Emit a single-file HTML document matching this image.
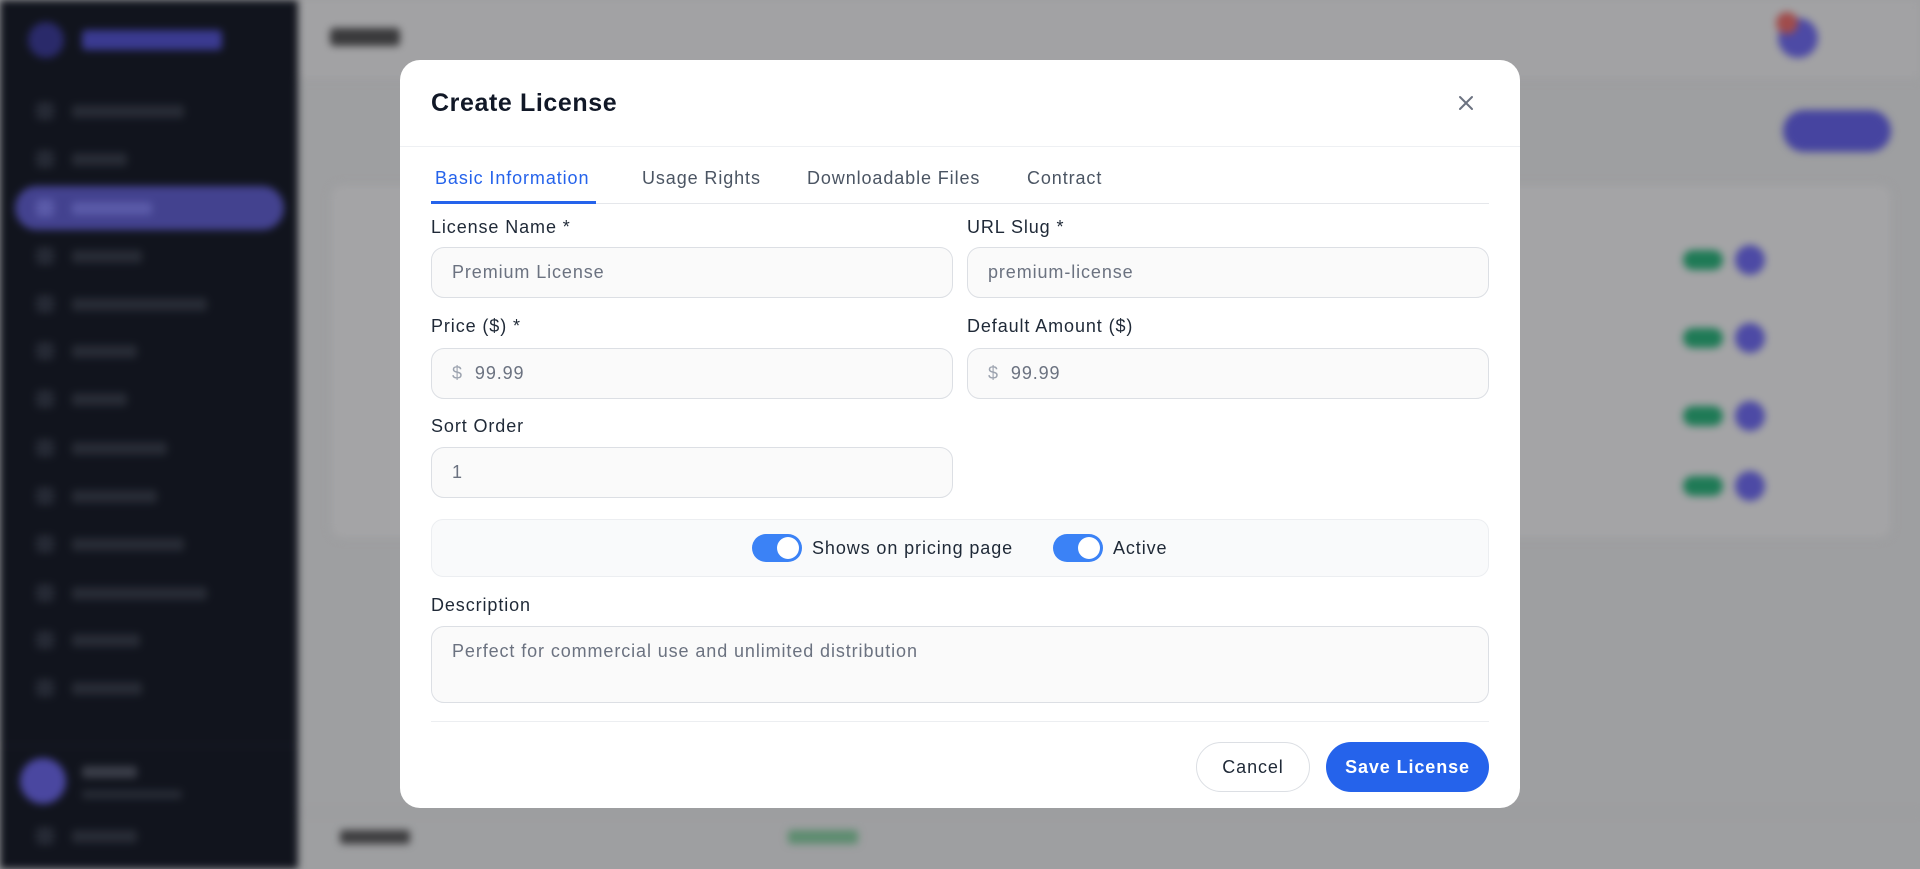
<!DOCTYPE html>
<html><head><meta charset="utf-8"><style>
*{box-sizing:border-box;margin:0;padding:0}
body{width:1920px;height:869px;overflow:hidden;font-family:"Liberation Sans",sans-serif;background:#9e9fa1;position:relative}
.bg{position:absolute;inset:0;filter:blur(4px)}
.side{position:absolute;left:0;top:0;width:298px;height:869px;background:#11141d}
.side .it{position:absolute;left:36px;height:16px;display:flex;align-items:center;gap:18px}
.side .ic{width:18px;height:18px;border-radius:4px;background:#252934}
.side .tx{height:13px;background:#272b35;border-radius:3px}
.pill{position:absolute;left:15px;top:186px;width:269px;height:44px;border-radius:22px;background:#43428f}
.main{position:absolute;left:298px;top:0;right:0;bottom:0}
.modal{position:absolute;left:400px;top:60px;width:1120px;height:748px;background:#fff;border-radius:20px;letter-spacing:0.9px}
.title{position:absolute;left:31px;font-size:25px;font-weight:700;color:#111827;letter-spacing:0.6px}
.hdr{position:absolute;left:0;right:0;top:86px;border-top:1px solid #eef0f3}
.tabs{position:absolute;left:31px;top:108px;width:1058px;height:36px;border-bottom:1px solid #e5e7eb}
.tab{position:absolute;top:0;font-size:18px;color:#4b5563}
.tab.on{color:#2563eb}
.ul{position:absolute;left:0;top:33px;width:165px;height:3px;background:#2563eb}
.lbl{position:absolute;font-size:18px;color:#1f2937}
.inp{position:absolute;height:51px;border:1px solid #dcdfe4;border-radius:13px;background:#fafafa;font-size:18px;color:#6b7280;padding-left:20px;display:flex;align-items:center}
.tg{position:absolute;width:50px;height:28px;border-radius:14px;background:#3b82f6}
.tg:after{content:"";position:absolute;right:3px;top:3px;width:22px;height:22px;border-radius:50%;background:#fff}
.btn{position:absolute;top:682px;height:50px;border-radius:25px;font-size:18px;display:flex;align-items:center;justify-content:center}
</style></head><body>
<div class="bg">
 <div class="side">
  <div style="position:absolute;left:28px;top:22px;width:36px;height:36px;border-radius:50%;background:#2a2a6a"></div>
  <div style="position:absolute;left:82px;top:30px;width:140px;height:20px;background:#3a3a90;border-radius:4px"></div>
  <div class="pill"></div>
  <div class="it" style="top:103px"><div class="ic"></div><div class="tx" style="width:112px"></div></div>
  <div class="it" style="top:151px"><div class="ic"></div><div class="tx" style="width:55px"></div></div>
  <div class="it" style="top:200px"><div class="ic" style="background:#5a5aa8"></div><div class="tx" style="width:80px;background:#5a5aa8"></div></div>
  <div class="it" style="top:248px"><div class="ic"></div><div class="tx" style="width:70px"></div></div>
  <div class="it" style="top:296px"><div class="ic"></div><div class="tx" style="width:135px"></div></div>
  <div class="it" style="top:343px"><div class="ic"></div><div class="tx" style="width:65px"></div></div>
  <div class="it" style="top:391px"><div class="ic"></div><div class="tx" style="width:55px"></div></div>
  <div class="it" style="top:440px"><div class="ic"></div><div class="tx" style="width:95px"></div></div>
  <div class="it" style="top:488px"><div class="ic"></div><div class="tx" style="width:85px"></div></div>
  <div class="it" style="top:536px"><div class="ic"></div><div class="tx" style="width:112px"></div></div>
  <div class="it" style="top:585px"><div class="ic"></div><div class="tx" style="width:135px"></div></div>
  <div class="it" style="top:632px"><div class="ic"></div><div class="tx" style="width:68px"></div></div>
  <div class="it" style="top:680px"><div class="ic"></div><div class="tx" style="width:70px"></div></div>
  <div style="position:absolute;left:0;right:0;top:745px;border-top:1px solid #1f2330"></div>
  <div style="position:absolute;left:20px;top:758px;width:46px;height:46px;border-radius:50%;background:#4a47a0"></div>
  <div style="position:absolute;left:82px;top:766px;width:55px;height:12px;background:#3a3d48;border-radius:3px"></div>
  <div style="position:absolute;left:82px;top:790px;width:100px;height:9px;background:#262a34;border-radius:3px"></div>
  <div class="it" style="top:828px"><div class="ic"></div><div class="tx" style="width:65px"></div></div>
 </div>
 <div class="main">
  <div style="position:absolute;left:0;right:0;top:0;height:80px;background:#a2a2a4;border-bottom:1px solid #979799"></div>
  <div style="position:absolute;left:32px;top:28px;width:70px;height:18px;background:#3a3a3c;border-radius:4px"></div>
  <div style="position:absolute;left:1480px;top:18px;width:40px;height:40px;border-radius:50%;background:#4d4aa5"></div>
  <div style="position:absolute;left:1478px;top:12px;width:22px;height:22px;border-radius:50%;background:#a04c4c"></div>
  <div style="position:absolute;left:1485px;top:110px;width:108px;height:42px;border-radius:21px;background:#4644a0"></div>
  <div style="position:absolute;left:32px;top:184px;width:1562px;height:355px;border-radius:12px;background:#a4a4a6;border:1px solid #9a9a9c"></div>
  <div style="position:absolute;left:1385px;top:250px;width:40px;height:20px;border-radius:10px;background:#1f7a56"></div>
  <div style="position:absolute;left:1385px;top:328px;width:40px;height:20px;border-radius:10px;background:#1f7a56"></div>
  <div style="position:absolute;left:1385px;top:406px;width:40px;height:20px;border-radius:10px;background:#1f7a56"></div>
  <div style="position:absolute;left:1385px;top:476px;width:40px;height:20px;border-radius:10px;background:#1f7a56"></div>
  <div style="position:absolute;left:1437px;top:245px;width:30px;height:30px;border-radius:50%;background:#4d4aa5"></div>
  <div style="position:absolute;left:1437px;top:323px;width:30px;height:30px;border-radius:50%;background:#4d4aa5"></div>
  <div style="position:absolute;left:1437px;top:401px;width:30px;height:30px;border-radius:50%;background:#4d4aa5"></div>
  <div style="position:absolute;left:1437px;top:471px;width:30px;height:30px;border-radius:50%;background:#4d4aa5"></div>
  <div style="position:absolute;left:0;right:0;top:812px;border-top:1px solid #979799"></div>
  <div style="position:absolute;left:42px;top:830px;width:70px;height:14px;background:#3e3e40;border-radius:3px"></div>
  <div style="position:absolute;left:490px;top:830px;width:70px;height:14px;background:#5d8c6f;border-radius:3px"></div>
 </div>
</div>
<div class="modal">
 <div class="title" style="top:29px">Create License</div>
 <svg style="position:absolute;left:1056px;top:33px" width="20" height="20" viewBox="0 0 20 20"><path d="M4 4L16 16M16 4L4 16" stroke="#6b7280" stroke-width="2" stroke-linecap="round"/></svg>
 <div class="hdr"></div>
 <div class="tabs">
  <div class="tab on" style="left:4px">Basic Information</div>
  <div class="tab" style="left:211px">Usage Rights</div>
  <div class="tab" style="left:376px">Downloadable Files</div>
  <div class="tab" style="left:596px">Contract</div>
  <div class="ul"></div>
 </div>
 <div class="lbl" style="left:31px;top:157px">License Name *</div>
 <div class="lbl" style="left:567px;top:157px">URL Slug *</div>
 <div class="inp" style="left:31px;top:187px;width:522px">Premium License</div>
 <div class="inp" style="left:567px;top:187px;width:522px">premium-license</div>
 <div class="lbl" style="left:31px;top:256px">Price ($) *</div>
 <div class="lbl" style="left:567px;top:256px">Default Amount ($)</div>
 <div class="inp" style="left:31px;top:288px;width:522px"><span style="color:#9ca3af;margin-right:12px">$</span>99.99</div>
 <div class="inp" style="left:567px;top:288px;width:522px"><span style="color:#9ca3af;margin-right:12px">$</span>99.99</div>
 <div class="lbl" style="left:31px;top:356px">Sort Order</div>
 <div class="inp" style="left:31px;top:387px;width:522px">1</div>
 <div style="position:absolute;left:31px;top:459px;width:1058px;height:58px;border:1px solid #eceef1;border-radius:12px;background:#f9fafb"></div>
 <div class="tg" style="left:352px;top:474px"></div>
 <div class="lbl" style="left:412px;top:478px">Shows on pricing page</div>
 <div class="tg" style="left:653px;top:474px"></div>
 <div class="lbl" style="left:713px;top:478px">Active</div>
 <div class="lbl" style="left:31px;top:535px">Description</div>
 <div class="inp" style="left:31px;top:566px;width:1058px;height:77px;align-items:flex-start;padding-top:14px">Perfect for commercial use and unlimited distribution</div>
 <div style="position:absolute;left:31px;top:661px;width:1058px;border-top:1px solid #eceef1"></div>
 <div class="btn" style="left:796px;width:114px;border:1px solid #dcdfe4;color:#1f2937;background:#fff">Cancel</div>
 <div class="btn" style="left:926px;width:163px;background:#2563eb;color:#fff;font-weight:700">Save License</div>
</div>
</body></html>
